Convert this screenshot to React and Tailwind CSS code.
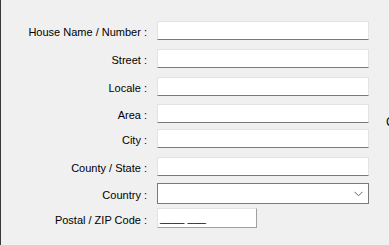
import React from "react";

const font = { fontFamily: '"Liberation Sans", Arial, sans-serif' };

function Label({ children }) {
  return (
    <div className="w-[146px] shrink-0 text-right text-[11px] leading-[14px] text-black mt-[3px] whitespace-nowrap">
      {children}
    </div>
  );
}

function TextBox() {
  return (
    <div className="w-[212px] h-[19px] bg-white border border-[#e3e3e3] border-b-[#7a7a7a]" />
  );
}

export default function App() {
  return (
    <div
      className="w-[389px] h-[245px] bg-[#f0f0f0] border-l border-l-[#3a3a3a] flex overflow-hidden"
      style={font}
    >
      <div className="w-[385px] shrink-0 flex flex-col pt-[21px]">
        <div className="flex items-center gap-[10px]">
          <Label>House Name / Number :</Label>
          <TextBox />
        </div>
        <div className="flex items-center gap-[10px] mt-[9px]">
          <Label>Street :</Label>
          <TextBox />
        </div>
        <div className="flex items-center gap-[10px] mt-[9px]">
          <Label>Locale :</Label>
          <TextBox />
        </div>
        <div className="flex items-center gap-[10px] mt-[8px]">
          <Label>Area :</Label>
          <TextBox />
        </div>
        <div className="flex items-center gap-[10px] mt-[6px]">
          <Label>City :</Label>
          <TextBox />
        </div>
        <div className="flex items-center gap-[10px] mt-[9px]">
          <Label>County / State :</Label>
          <TextBox />
        </div>
        <div className="flex items-center gap-[10px] mt-[7px]">
          <Label>Country :</Label>
          <div className="w-[212px] h-[21px] bg-white border border-[#7a7a7a] flex items-center justify-end pr-[5px]">
            <svg width="9" height="6" viewBox="0 0 9 6" fill="none">
              <path d="M0.5 0.8 L4.5 4.8 L8.5 0.8" stroke="#606060" strokeWidth="1" />
            </svg>
          </div>
        </div>
        <div className="flex items-center gap-[10px] mt-[4px]">
          <Label>Postal / ZIP Code :</Label>
          <div className="w-[100px] h-[20px] bg-white border border-[#e3e3e3] border-b-[#a0a0a0] border-r-[#a0a0a0] flex items-center pl-[2px] text-[11px] leading-[14px] text-black whitespace-pre">
            {"____ ___"}
          </div>
        </div>
      </div>
      <div className="pt-[115px] text-[12px] leading-[14px] text-black">C</div>
    </div>
  );
}
